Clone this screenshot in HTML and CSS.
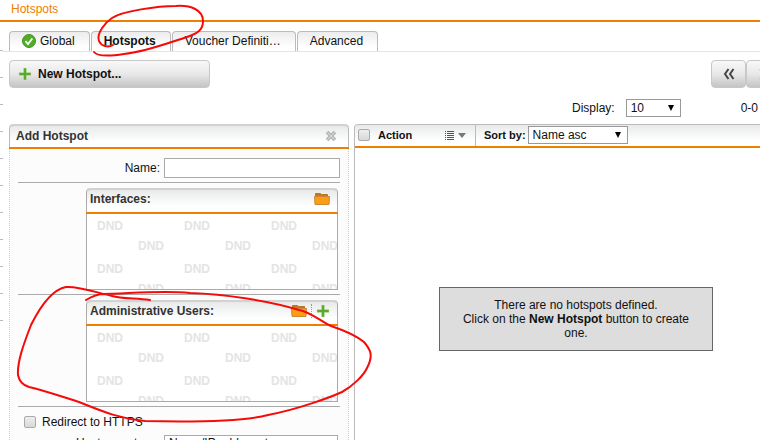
FILE: index.html
```html
<!DOCTYPE html>
<html lang="en">
<head>
  <meta charset="UTF-8">
  <meta name="viewport" content="width=device-width, initial-scale=1.0">
  <title>Hotspots</title>
  <link rel="stylesheet" href="styles.css">
</head>
<body>
  <!-- shared icons -->
  <svg class="icon-defs" width="0" height="0">
    <symbol id="icon-plus" viewBox="0 0 14 14">
      <path d="M5.500 1h3v4.500H13v3H8.500V13h-3V8.500H1v-3h4.500z" fill="#5aaa2a" stroke="#cfe3c2" stroke-width=".5"/>
    </symbol>
    <symbol id="icon-folder" viewBox="0 0 16 14">
      <path d="M1.500 4V1.500h5l1 1h6V5" fill="#c9781a" stroke="#b5742c"/>
      <path d="M.5 4.500h15l-.5 8H1z" fill="#ff9d12" stroke="#c98a3c"/>
    </symbol>
  </svg>

  <!-- edge of the navigation menu -->
  <div class="rail"></div>

  <main class="main">
    <h1 class="page-title">Hotspots</h1>

    <nav class="tabs">
      <a class="tab" href="#global">
        <svg width="14" height="14" viewBox="0 0 14 14">
          <circle cx="7" cy="7" r="6.500" fill="#4fae26" stroke="#46912a"/>
          <path d="M3.500 7.200l2.500 2.800 4.300-5.500" fill="none" stroke="#fff" stroke-width="1.800"/>
        </svg>
        Global
      </a>
      <a class="tab active" href="#hotspots">Hotspots</a>
      <a class="tab" href="#vouchers">Voucher Definiti…</a>
      <a class="tab" href="#advanced">Advanced</a>
    </nav>

    <div class="toolbar">
      <button class="btn btn-new" type="button">
        <svg width="14" height="14"><use href="#icon-plus"/></svg>
        New Hotspot...
      </button>
      <div class="pager">
        <button class="btn btn-page" type="button" aria-label="First page">
          <svg width="12" height="12" viewBox="0 0 12 12"><path d="M5.500 1L2 6l3.500 5M10.500 1L7 6l3.500 5" fill="none" stroke="#444" stroke-width="2"/></svg>
        </button>
        <button class="btn btn-page" type="button" aria-label="Next page" disabled>
          <svg width="12" height="12" viewBox="0 0 12 12"><path d="M2 1l3.500 5L2 11M7 1l3.500 5L7 11" fill="none" stroke="#bbb" stroke-width="2"/></svg>
        </button>
      </div>
    </div>

    <div class="display-row">
      <label for="display">Display:</label>
      <select id="display" class="select select-small"><option>10</option></select>
      <span class="range">0-0</span>
    </div>

    <div class="columns">
      <!-- ADD HOTSPOT FORM -->
      <section class="panel form-panel">
        <header class="panel-head">
          <h2>Add Hotspot</h2>
          <button class="icon-btn" type="button" aria-label="Close">
            <svg width="12" height="12" viewBox="0 0 12 12"><path d="M2 2l8 8M10 2l-8 8" stroke="#aaa" stroke-width="3.500"/><path d="M2 2l8 8M10 2l-8 8" stroke="#d2d2d2" stroke-width="1.500"/></svg>
          </button>
        </header>
        <form class="form">
          <div class="field">
            <label for="name">Name:</label>
            <input id="name" class="text" type="text">
          </div>
          <div class="group">
            <div class="drop">
              <header class="drop-head">
                <h3>Interfaces:</h3>
                <button class="icon-btn" type="button" aria-label="Browse interfaces"><svg width="16" height="14"><use href="#icon-folder"/></svg></button>
              </header>
              <div class="drop-body">
                <div class="dnd"><span>DND</span><span>DND</span><span>DND</span></div>
                <div class="dnd odd"><span>DND</span><span>DND</span><span>DND</span></div>
                <div class="dnd"><span>DND</span><span>DND</span><span>DND</span></div>
                <div class="dnd odd"><span>DND</span><span>DND</span><span>DND</span></div>
              </div>
            </div>
          </div>
          <div class="group">
            <div class="drop">
              <header class="drop-head">
                <h3>Administrative Users:</h3>
                <button class="icon-btn" type="button" aria-label="Browse users"><svg width="16" height="14"><use href="#icon-folder"/></svg></button>
                <button class="icon-btn divided" type="button" aria-label="Add user"><svg width="14" height="14"><use href="#icon-plus"/></svg></button>
              </header>
              <div class="drop-body">
                <div class="dnd"><span>DND</span><span>DND</span><span>DND</span></div>
                <div class="dnd odd"><span>DND</span><span>DND</span><span>DND</span></div>
                <div class="dnd"><span>DND</span><span>DND</span><span>DND</span></div>
                <div class="dnd odd"><span>DND</span><span>DND</span><span>DND</span></div>
              </div>
            </div>
          </div>
          <div class="group last">
            <div class="check-row">
              <input id="https" class="check" type="checkbox">
              <label for="https">Redirect to HTTPS</label>
            </div>
            <div class="field host">
              <label for="host">Hostname type:</label>
              <input id="host" class="text" type="text" value="Name/IP address t">
            </div>
          </div>
        </form>
      </section>

      <!-- HOTSPOT LIST -->
      <section class="panel list-panel">
        <header class="list-head">
          <div class="action">
            <input id="all" class="check" type="checkbox">
            <label for="all">Action</label>
            <button class="icon-btn" type="button" aria-label="Action menu">
              <svg width="22" height="10" viewBox="0 0 22 10"><path d="M0 1.500h1M0 3.500h1M0 5.500h1M0 7.500h1M0 9.500h1M2 1.500h7M2 3.500h7M2 5.500h7M2 7.500h7M2 9.500h7" stroke="#555"/><path d="M13 3h8l-4 5z" fill="#777"/></svg>
            </button>
          </div>
          <div class="sort">
            <label for="sort">Sort by:</label>
            <select id="sort" class="select select-sort"><option>Name asc</option></select>
          </div>
        </header>
        <p class="message">There are no hotspots defined.<br>Click on the <b>New Hotspot</b> button to create one.</p>
      </section>
    </div>
  </main>

  <!-- hand-drawn marks over the page -->
  <svg class="marks" width="760" height="440" viewBox="0 0 760 440">
    <path d="M113 45C108 48 101 46 99 41C96 33 106 22 112 18C122 11 158 6 176 6C191 5 203 10 203 21C203 29 199 33 187 37C168 43 145 52 124 54C111 56 98 57 94 52"/>
    <path d="M150 300C135 298 122 299 112 296C98 293 79 286 66 287C50 290 38 311 31 325C24 343 17 362 18 375C19 380 22 385 29 387C46 391 63 397 79 402C106 413 122 419 145 421C190 422 245 421 268 415C299 409 331 397 342 392C353 386 364 375 367 368C374 355 370 349 364 342C354 334 343 330 331 326C319 320 310 312 299 310C270 301 225 294 190 293C160 290 125 294 104 294C98 294 91 297 86 300"/>
  </svg>
</body>
</html>
```
FILE: styles.css
```css
* {
  box-sizing: border-box;
}

body {
  margin: 0;
  height: 100vh;
  display: flex;
  overflow: hidden;
  position: relative;
  background: #fff;
  color: #111;
  font: 12px/14px "Liberation Sans", Arial, sans-serif;
}

h1, h2, h3, p {
  margin: 0;
  font-size: 12px;
}

button, input, select {
  font: inherit;
  color: inherit;
}

.icon-defs {
  position: absolute;
}

/* MENU EDGE */
.rail {
  width: 3px;
  flex: none;
  margin-top: 24px;
  height: 297px;
  background: repeating-linear-gradient(#fff 0 26px, #bbb 26px 27px);
}

.main {
  flex: 1;
  min-width: 0;
}

.page-title {
  height: 22px;
  margin-left: -3px;
  padding: 2px 11px;
  border-bottom: 2px solid #ee8000;
  color: #ee8000;
  font-weight: normal;
}

/* TABS */
.tabs {
  display: flex;
  gap: 1px;
  margin-top: 9px;
  padding-left: 6px;
  border-bottom: 1px solid #e5e5e5;
}

.tab {
  display: flex;
  align-items: center;
  gap: 4px;
  height: 20px;
  padding: 0 14px 2px 12px;
  border: 1px solid #bbb;
  border-bottom: 0;
  border-radius: 4px 4px 0 0;
  background: linear-gradient(#ececec, #fff 80%);
  color: #111;
  text-decoration: none;
}

.tab.active {
  font-weight: bold;
}

/* TOOLBAR */
.toolbar {
  display: flex;
  justify-content: space-between;
  margin: 8px -21px 0 6px;
}

.btn {
  display: flex;
  align-items: center;
  height: 28px;
  border: 1px solid #c8c8c8;
  border-radius: 4px;
  background: linear-gradient(#f8f8f8, #e8e8e8 50%, #c4c4c4);
}

.btn-new {
  width: 201px;
  gap: 6px;
  padding: 0 8px;
  font-weight: bold;
}

.pager {
  display: flex;
}

.btn-page {
  width: 35px;
  justify-content: center;
}

.display-row {
  display: flex;
  align-items: center;
  justify-content: flex-end;
  margin-top: 11px;
  padding-right: 2px;
}

.select {
  appearance: none;
  height: 18px;
  padding: 0 4px;
  border: 1px solid #999;
  border-radius: 0;
  background: #fff url("data:image/svg+xml,%3Csvg xmlns='http://www.w3.org/2000/svg' width='6' height='6'%3E%3Cpath d='M0 0h6L3 6z'/%3E%3C/svg%3E") no-repeat right 6px center;
}

.select-small {
  width: 55px;
  margin-left: 11px;
}

.select-sort {
  width: 100px;
}

.range {
  margin-left: 60px;
}

/* PANELS */
.columns {
  display: flex;
  gap: 5px;
  margin-top: 7px;
  padding-left: 6px;
}

.form-panel {
  width: 340px;
  flex: none;
}

.list-panel {
  flex: 1;
  min-height: 330px;
  border-left: 1px solid #bbb;
  border-radius: 4px 0 0 0;
}

.panel-head, .list-head, .drop-head {
  display: flex;
  align-items: center;
  border-top: 2px solid #d2d2d2;
  border-bottom: 2px solid #ee8000;
  background: linear-gradient(#e8eaea, #fff 75%);
}

.panel-head {
  height: 25px;
  padding: 0 12px 2px 7px;
  border-radius: 4px 4px 0 0;
  box-shadow: inset 1px 0 #bbb, inset -1px 0 #bbb;
  color: #333;
}

.panel-head h2, .drop-head h3 {
  flex: 1;
}

.icon-btn {
  display: flex;
  padding: 0;
  border: 0;
  background: none;
}

.form {
  padding: 9px 8px 0;
  border: 1px dotted #ccc;
  border-top-width: 0;
  background: #fcfcfc;
}

.field {
  display: flex;
  align-items: center;
  justify-content: flex-end;
  gap: 4px;
}

.text {
  width: 176px;
  height: 20px;
  padding: 0 4px;
  border: 1px solid #aaa;
  background: #fff;
}

.group {
  margin-top: 4px;
  padding: 5px 2px 0 68px;
  border-top: 1px solid #aaa;
}

.drop {
  height: 102px;
  display: flex;
  flex-direction: column;
}

.drop-head {
  height: 26px;
  flex: none;
  padding: 0 8px 4px 4px;
  border-radius: 4px 4px 0 0;
  box-shadow: inset 1px 0 #aaa, inset -1px 0 #aaa;
  color: #333;
}

.divided {
  margin-left: 4px;
  padding-left: 4px;
  border-left: 1px dotted #999;
}

.drop-body {
  flex: 1;
  overflow: hidden;
  padding-top: 5px;
  border: 1px solid #aaa;
  border-top: 0;
  background: #fff;
  color: #e4e4e4;
  font-weight: bold;
}

.dnd {
  display: flex;
  height: 20px;
  padding-left: 10px;
}

.dnd.odd {
  height: 23px;
  padding-left: 51px;
}

.dnd span {
  width: 87px;
  flex: none;
}

.last {
  padding: 8px 2px 0 6px;
}

.check-row {
  display: flex;
  align-items: center;
  gap: 6px;
}

.host {
  margin-top: 6px;
}

.host .text {
  width: 174px;
  height: 16px;
}

.check {
  appearance: none;
  width: 12px;
  height: 12px;
  flex: none;
  margin: 0;
  border: 1px solid #aaa;
  border-radius: 2px;
  background: linear-gradient(#eee, #d8d8d8);
}

/* LIST HEADER */
.list-head {
  height: 24px;
  border-top: 1px solid #bbb;
  border-radius: 4px 0 0 0;
  color: #111;
  font-weight: bold;
  font-size: 11px;
}

.action {
  display: flex;
  align-items: center;
  width: 121px;
  height: 100%;
  padding: 0 8px 2px 3px;
  border-right: 1px solid #bbb;
}

.action label {
  flex: 1;
  margin-left: 8px;
}

.sort {
  display: flex;
  align-items: center;
  gap: 2px;
  padding: 0 0 1px 8px;
}

.sort .select {
  font-weight: normal;
  font-size: 12px;
}

.message {
  width: 274px;
  margin: 139px 0 0 84px;
  padding: 10px 20px;
  border: 1px solid #666;
  background: #ddd;
  text-align: center;
}

/* MARKS */
.marks {
  position: absolute;
  top: 0;
  left: 0;
  pointer-events: none;
  fill: none;
  stroke: #f50a0a;
  stroke-width: 2;
  stroke-linecap: round;
}
```
